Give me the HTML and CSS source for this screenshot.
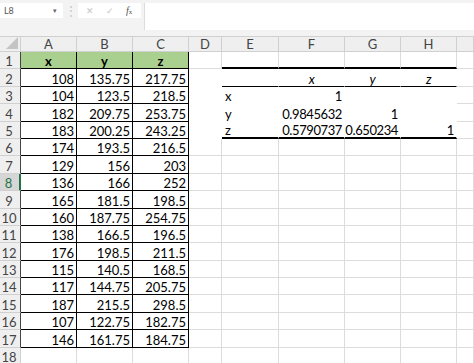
FILE: index.html
```
<!DOCTYPE html>
<html>
  <head>
    <title>Correlation</title>
    <link rel="stylesheet" href="styles.css">
  </head>
  <body>
    <div class="topbar">
      <div class="namebox"><span>L8</span><span class="arrow">&#9662;</span></div>
      <div class="dots">&#8942;</div>
      <div class="fxbox">
        <span class="cancel">&#10005;</span>
        <span class="enter">&#10003;</span>
        <span class="fx"><i>f</i><small>x</small></span>
      </div>
      <div class="formula"></div>
    </div>

    <div class="sheet">
      <div class="h corner"><svg width="12" height="12" viewBox="0 0 12 12"><polygon points="12,0 12,12 0,12" fill="#c4c4c4"/></svg></div>
      <div class="h">A</div><div class="h">B</div><div class="h">C</div><div class="h">D</div><div class="h">E</div><div class="h">F</div><div class="h">G</div><div class="h">H</div><div class="h"></div>

      <div class="r e">1</div><div class="c b g">x</div><div class="c b g">y</div><div class="c b g">z</div><div class="c"></div><div class="c top"></div><div class="c top"></div><div class="c top"></div><div class="c top"></div><div class="c"></div>
      <div class="r e">2</div><div class="c b">108</div><div class="c b">135.75</div><div class="c b">217.75</div><div class="c t"></div><div class="c t mid"></div><div class="c t mid hd">x</div><div class="c t mid hd">y</div><div class="c t mid hd">z</div><div class="c"></div>
      <div class="r e">3</div><div class="c b">104</div><div class="c b">123.5</div><div class="c b">218.5</div><div class="c t"></div><div class="c t lbl">x</div><div class="c t">1</div><div class="c t"></div><div class="c t"></div><div class="c"></div>
      <div class="r e">4</div><div class="c b">182</div><div class="c b">209.75</div><div class="c b">253.75</div><div class="c t"></div><div class="c t lbl">y</div><div class="c t">0.9845632</div><div class="c t">1</div><div class="c t"></div><div class="c"></div>
      <div class="r e">5</div><div class="c b">183</div><div class="c b">200.25</div><div class="c b">243.25</div><div class="c t"></div><div class="c t bot lbl">z</div><div class="c t bot">0.5790737</div><div class="c t bot">0.650234</div><div class="c t bot">1</div><div class="c"></div>
      <div class="r e">6</div><div class="c b">174</div><div class="c b">193.5</div><div class="c b">216.5</div><div class="c"></div><div class="c"></div><div class="c"></div><div class="c"></div><div class="c"></div><div class="c"></div>
      <div class="r e">7</div><div class="c b">129</div><div class="c b">156</div><div class="c b">203</div><div class="c"></div><div class="c"></div><div class="c"></div><div class="c"></div><div class="c"></div><div class="c"></div>
      <div class="r e sel">8</div><div class="c b">136</div><div class="c b">166</div><div class="c b">252</div><div class="c"></div><div class="c"></div><div class="c"></div><div class="c"></div><div class="c"></div><div class="c"></div>
      <div class="r e">9</div><div class="c b">165</div><div class="c b">181.5</div><div class="c b">198.5</div><div class="c"></div><div class="c"></div><div class="c"></div><div class="c"></div><div class="c"></div><div class="c"></div>
      <div class="r e">10</div><div class="c b">160</div><div class="c b">187.75</div><div class="c b">254.75</div><div class="c"></div><div class="c"></div><div class="c"></div><div class="c"></div><div class="c"></div><div class="c"></div>
      <div class="r e">11</div><div class="c b">138</div><div class="c b">166.5</div><div class="c b">196.5</div><div class="c"></div><div class="c"></div><div class="c"></div><div class="c"></div><div class="c"></div><div class="c"></div>
      <div class="r e">12</div><div class="c b">176</div><div class="c b">198.5</div><div class="c b">211.5</div><div class="c"></div><div class="c"></div><div class="c"></div><div class="c"></div><div class="c"></div><div class="c"></div>
      <div class="r e">13</div><div class="c b">115</div><div class="c b">140.5</div><div class="c b">168.5</div><div class="c"></div><div class="c"></div><div class="c"></div><div class="c"></div><div class="c"></div><div class="c"></div>
      <div class="r e">14</div><div class="c b">117</div><div class="c b">144.75</div><div class="c b">205.75</div><div class="c"></div><div class="c"></div><div class="c"></div><div class="c"></div><div class="c"></div><div class="c"></div>
      <div class="r e">15</div><div class="c b">187</div><div class="c b">215.5</div><div class="c b">298.5</div><div class="c"></div><div class="c"></div><div class="c"></div><div class="c"></div><div class="c"></div><div class="c"></div>
      <div class="r e">16</div><div class="c b">107</div><div class="c b">122.75</div><div class="c b">182.75</div><div class="c"></div><div class="c"></div><div class="c"></div><div class="c"></div><div class="c"></div><div class="c"></div>
      <div class="r e">17</div><div class="c b">146</div><div class="c b">161.75</div><div class="c b">184.75</div><div class="c"></div><div class="c"></div><div class="c"></div><div class="c"></div><div class="c"></div><div class="c"></div>
      <div class="r">18</div><div class="c"></div><div class="c"></div><div class="c"></div><div class="c"></div><div class="c"></div><div class="c"></div><div class="c"></div><div class="c"></div><div class="c"></div>
    </div>
  </body>
</html>
```

FILE: styles.css
```
body {
  margin: 0;
  overflow: hidden;
  background: #fff;
  color: #000;
  font-family: Lato, "Liberation Sans", sans-serif;
  font-size: 13px;
}

/* formula bar */
.topbar {
  display: flex;
  align-items: flex-start;
  height: 36px;
  padding-top: 3px;
  box-sizing: border-box;
  background: #f3f3f3;
}
.namebox {
  display: flex;
  align-items: center;
  justify-content: space-between;
  width: 63px;
  height: 15px;
  padding: 0 6px 0 4px;
  box-sizing: border-box;
  background: #fff;
  font-size: 9px;
  color: #555;
}
.namebox .arrow {
  font-size: 7px;
  color: #666;
}
.dots {
  width: 15px;
  text-align: center;
  color: #c6c6c6;
  font-size: 12px;
  line-height: 15px;
}
.fxbox {
  display: flex;
  align-items: center;
  width: 63px;
  height: 15px;
  background: #fff;
  color: #c4c4c4;
  font-size: 9px;
}
.fxbox .cancel {
  margin-left: 8px;
}
.fxbox .enter {
  margin-left: 12px;
}
.fxbox .fx {
  margin-left: 12px;
  color: #555;
  font-family: "Liberation Serif", serif;
  font-size: 10px;
}
.fxbox .fx small {
  font-size: 7px;
}
.formula {
  flex: 1;
  height: 27px;
  margin-left: 3px;
  background: #fff;
  border-left: 1px solid #dcdcdc;
}

/* grid */
.sheet {
  display: grid;
  grid-template-columns: 21px 56px 56px 56px 33px 57px 66px 56px 56px 17px;
  grid-template-rows: 16px repeat(18, 17.4px);
}
.sheet > div {
  display: flex;
  align-items: flex-end;
  justify-content: flex-end;
  padding: 0 2px 0 0;
  box-sizing: border-box;
  border-right: 1px solid #dcdcdc;
  border-bottom: 1px solid #dcdcdc;
  line-height: 14px;
  white-space: nowrap;
}
.sheet > .h {
  align-items: center;
  justify-content: center;
  padding: 0;
  background: #efefef;
  border-color: #d0d0d0;
  border-top: 1px solid #d0d0d0;
  line-height: 16px;
  color: #444;
}
.sheet > .corner {
  justify-content: flex-end;
  align-items: flex-end;
  padding: 0 2px 2px 0;
}
.sheet > .r {
  justify-content: center;
  padding: 0 2px 0 0;
  background: #efefef;
  border-color: #d0d0d0;
  color: #444;
}
.sheet > .r.e {
  border-right-color: #444;
}
.sheet > .r.sel {
  background: #d6d6d6;
  color: #217346;
  border-right: 2px solid #217346;
}
.sheet > .b {
  border-right-color: #000;
  border-bottom-color: #000;
}
.sheet > .g {
  justify-content: center;
  padding: 0;
  background: #a9d08e;
  font-weight: bold;
}

/* correlation table */
.sheet > .top {
  border-bottom: 2px solid #000;
}
.sheet > .t {
  border-right-color: #fff;
  border-bottom-color: #fff;
  letter-spacing: -0.4px;
}
.sheet > .mid {
  border-bottom-color: #000;
}
.sheet > .bot {
  border-bottom: 2px solid #000;
}
.sheet > .hd {
  justify-content: center;
  padding: 0;
  font-style: italic;
}
.sheet > .lbl {
  justify-content: flex-start;
  padding-left: 3px;
}
```
